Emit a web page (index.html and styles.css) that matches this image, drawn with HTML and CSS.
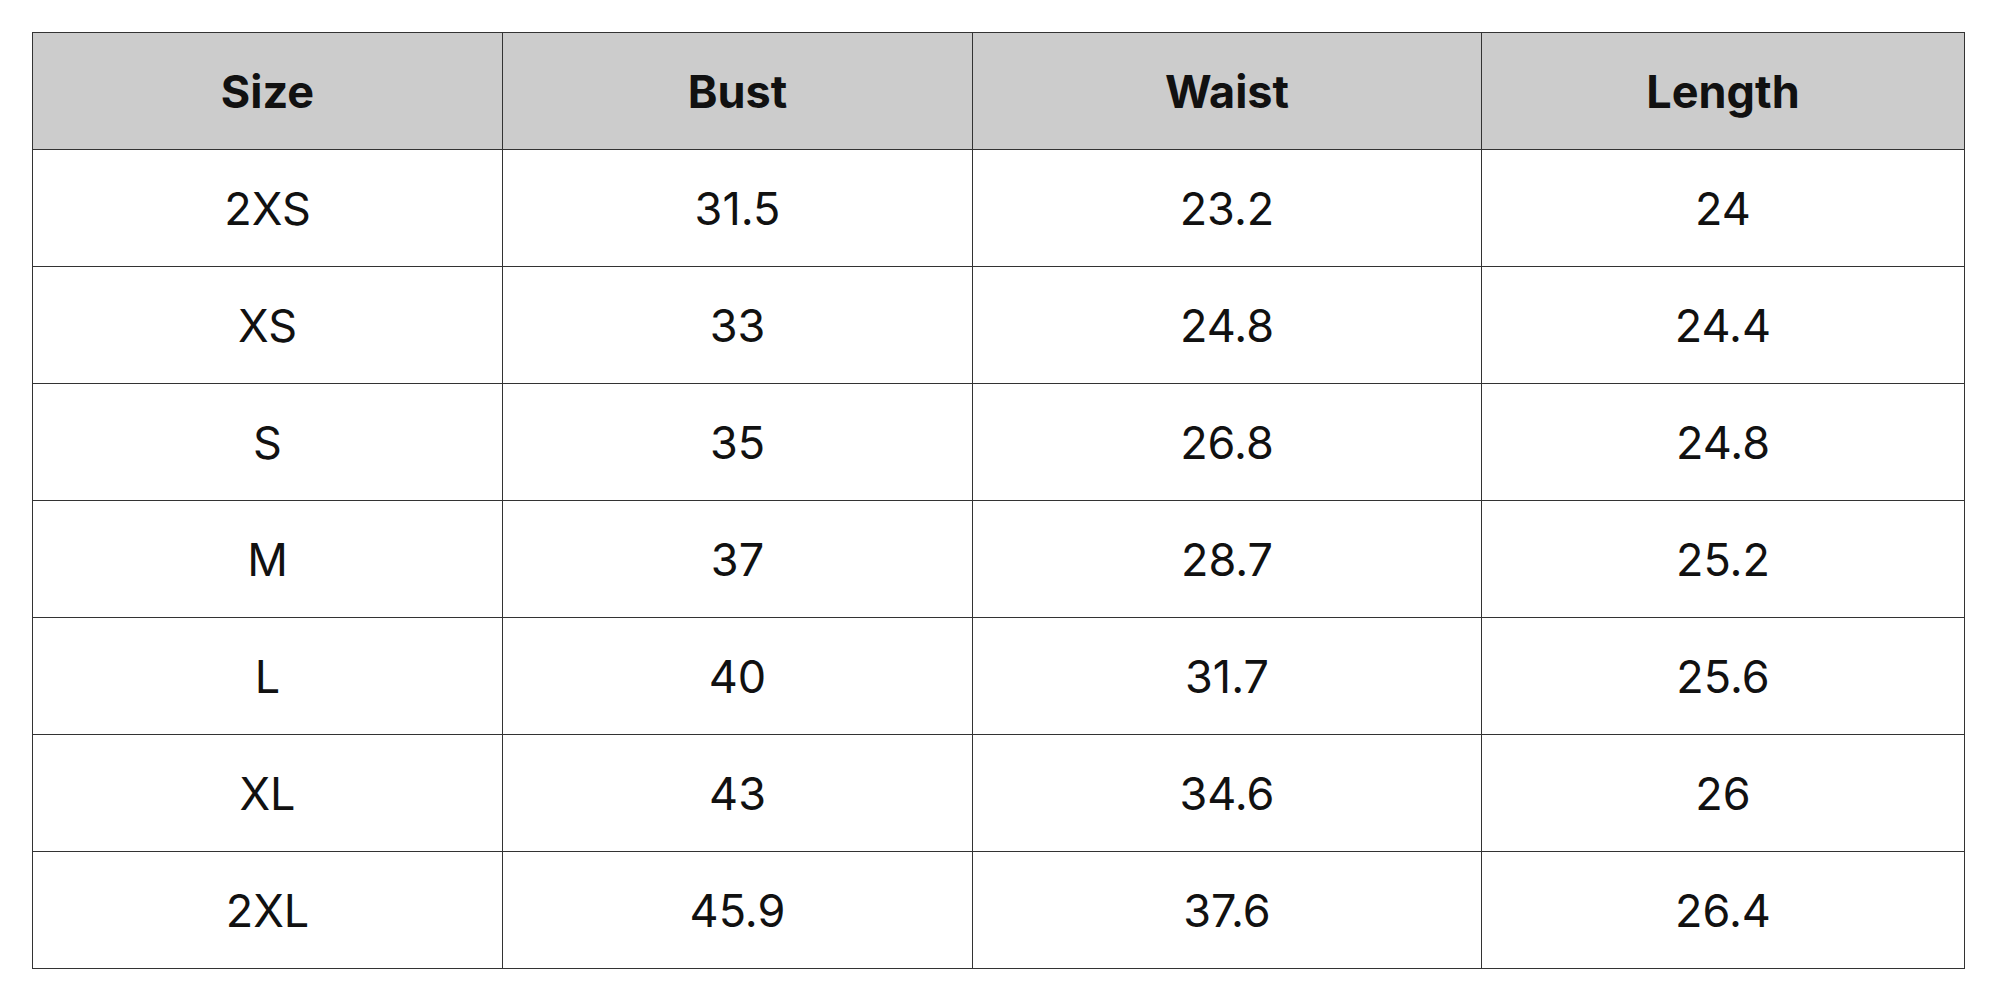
FILE: index.html
```html
<!DOCTYPE html>
<html>
<head>
<meta charset="utf-8">
<link rel="stylesheet" href="styles.css">
</head>
<body>
<table class="size-table">
  <colgroup>
    <col class="c1"><col class="c2"><col class="c3"><col class="c4">
  </colgroup>
  <thead>
    <tr><th>Size</th><th>Bust</th><th>Waist</th><th>Length</th></tr>
  </thead>
  <tbody>
    <tr><td>2XS</td><td>31.5</td><td>23.2</td><td>24</td></tr>
    <tr><td>XS</td><td>33</td><td>24.8</td><td>24.4</td></tr>
    <tr><td>S</td><td>35</td><td>26.8</td><td>24.8</td></tr>
    <tr><td>M</td><td>37</td><td>28.7</td><td>25.2</td></tr>
    <tr><td>L</td><td>40</td><td>31.7</td><td>25.6</td></tr>
    <tr><td>XL</td><td>43</td><td>34.6</td><td>26</td></tr>
    <tr><td>2XL</td><td>45.9</td><td>37.6</td><td>26.4</td></tr>
  </tbody>
</table>
</body>
</html>
```
FILE: styles.css
```css
html, body {
  margin: 0;
  padding: 0;
  background: #ffffff;
}
body {
  padding: 32px;
  font-family: Inter, "Liberation Sans", sans-serif;
  color: #111111;
}
.size-table {
  border-collapse: collapse;
  table-layout: fixed;
  width: 1932px;
}
.c1 { width: 470px; }
.c2 { width: 470px; }
.c3 { width: 509px; }
.c4 { width: 483px; }
.size-table th,
.size-table td {
  border: 1px solid #333333;
  height: 116px;
  padding: 0;
  text-align: center;
  vertical-align: middle;
  font-size: 45px;
  line-height: 1;
}
.size-table th {
  background: #cccccc;
  font-weight: 700;
}
.size-table td {
  font-weight: 400;
}
```
